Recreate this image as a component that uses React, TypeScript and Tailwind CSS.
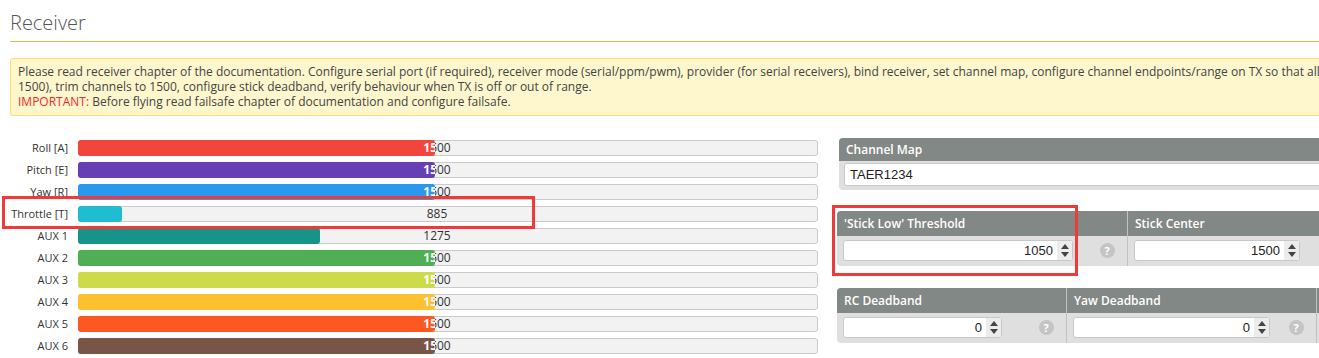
import React from "react";

type Channel = { name: string; color: string; value: number; fill: number };

const channels: Channel[] = [
    { name: "Roll [A]", color: "#f1453d", value: 1500, fill: 357 },
    { name: "Pitch [E]", color: "#673fb4", value: 1500, fill: 357 },
    { name: "Yaw [R]", color: "#2b98f0", value: 1500, fill: 357 },
    { name: "Throttle [T]", color: "#1fbcd2", value: 885, fill: 44 },
    { name: "AUX 1", color: "#159588", value: 1275, fill: 242 },
    { name: "AUX 2", color: "#50ae55", value: 1500, fill: 357 },
    { name: "AUX 3", color: "#cdda49", value: 1500, fill: 357 },
    { name: "AUX 4", color: "#fdc02f", value: 1500, fill: 357 },
    { name: "AUX 5", color: "#fd5722", value: 1500, fill: 357 },
    { name: "AUX 6", color: "#795548", value: 1500, fill: 357 },
];

const Spinner = () => (
    <div className="flex h-full w-[15px] flex-col items-center justify-center gap-[3px] bg-[#ececec]">
        <svg width="8" height="5" viewBox="0 0 8 5">
            <path d="M4 0 L8 5 L0 5 Z" fill="#444" />
        </svg>
        <svg width="8" height="5" viewBox="0 0 8 5">
            <path d="M0 0 L8 0 L4 5 Z" fill="#444" />
        </svg>
    </div>
);

const Help = () => (
    <div className="flex h-[15px] w-[15px] items-center justify-center rounded-full bg-[#c4c4c4] text-[11px] font-bold leading-none text-white">
        ?
    </div>
);

const NumberInput = ({ value, width }: { value: number; width: string }) => (
    <div className={`flex h-[21px] items-stretch rounded-[3px] border border-[#c8c8c8] bg-white ${width}`}>
        <div className="flex flex-1 items-center justify-end pr-[4px] font-['Liberation_Sans',Arial,sans-serif] text-[13px] text-[#222]">
            {value}
        </div>
        <Spinner />
    </div>
);

const Cell = ({
    title,
    value,
    cellWidth,
    inputWidth,
    last,
}: {
    title: string;
    value: number;
    cellWidth: string;
    inputWidth: string;
    last?: boolean;
}) => (
    <div className={`flex shrink-0 flex-col ${cellWidth} ${last ? "" : "border-r border-[#c2c2c2]"}`}>
        <div className="flex h-[25px] items-center whitespace-nowrap bg-[#828885] pl-[7px] text-[12px] font-semibold text-white">
            {title}
        </div>
        <div className="flex h-[30px] items-center justify-between pl-[6px] pb-[1px]">
            <NumberInput value={value} width={inputWidth} />
            <div className="flex w-[40px] justify-center">
                <Help />
            </div>
        </div>
    </div>
);

export default function App() {
    return (
        <div className="relative h-[358px] w-full overflow-hidden bg-white font-['Open_Sans',sans-serif] text-[#333]">
            <div className="w-[1360px] pl-[10px]">
                <div className="border-b border-[#ecb53a] pb-[6px] pt-[10px]">
                    <h1 className="text-[20px] font-light leading-[25px] text-[#555]">Receiver</h1>
                </div>
                <div className="mt-[16px] rounded-[3px] border border-[#fbe06a] bg-[#fef6cd] pb-[6px] pl-[7px] pt-[5px] text-[12px] leading-[15px] whitespace-nowrap text-[#444]">
                    <div>
                        Please read receiver chapter of the documentation. Configure serial port (if required), receiver mode (serial/ppm/pwm), provider (for serial receivers), bind receiver, set channel map, configure channel endpoints/range on TX so that all channels go from ~1000 to ~2000. Set midpoint (default
                    </div>
                    <div>
                        1500), trim channels to 1500, configure stick deadband, verify behaviour when TX is off or out of range.
                    </div>
                    <div>
                        <span className="text-[#f32a2a]">IMPORTANT:</span> Before flying read failsafe chapter of documentation and configure failsafe.
                    </div>
                </div>
            </div>

            <div className="mt-[24px] flex">
                <div className="flex w-[818px] shrink-0 flex-col gap-[6px]">
                    {channels.map((ch) => (
                        <div key={ch.name} className="flex h-[16px] items-center">
                            <div className="w-[68px] whitespace-nowrap text-right text-[11px] leading-[16px] text-[#333]">
                                {ch.name}
                            </div>
                            <div className="relative ml-[10px] h-[16px] flex-1 rounded-[3px] border border-[#cbcbcb] bg-[#f2f2f2]">
                                <div className="absolute left-0 top-0 w-[716px] text-center text-[12px] leading-[14px] text-[#333]">
                                    {ch.value}
                                </div>
                                <div
                                    className="absolute left-[-1px] top-[-1px] h-[16px] overflow-hidden rounded-[3px]"
                                    style={{ width: ch.fill, backgroundColor: ch.color }}
                                >
                                    <div className="absolute left-[1px] top-[1px] w-[716px] text-center text-[12px] font-bold leading-[14px] text-white">
                                        {ch.value}
                                    </div>
                                </div>
                            </div>
                        </div>
                    ))}
                </div>

                <div className="ml-[20px] flex w-[520px] shrink-0 flex-col">
                    <div className="-mt-[2px] ml-[1px] overflow-hidden rounded-l-[4px] bg-[#dfdfdf]">
                        <div className="flex h-[23px] items-center bg-[#828885] pl-[7px] text-[12px] font-semibold text-white">
                            Channel Map
                        </div>
                        <div className="px-[5px] pb-[4px] pt-[2px]">
                            <div className="flex h-[23px] items-center rounded-[3px] border border-[#c8c8c8] bg-white pl-[5px] font-['Liberation_Sans',Arial,sans-serif] text-[13px] text-[#222]">
                                TAER1234
                            </div>
                        </div>
                    </div>

                    <div className="-ml-[1px] mt-[21px] flex overflow-hidden rounded-l-[4px] bg-[#dfdfdf]">
                        <Cell title="'Stick Low' Threshold" value={1050} cellWidth="w-[291px]" inputWidth="w-[230px]" />
                        <Cell title="Stick Center" value={1500} cellWidth="w-[229px]" inputWidth="w-[166px]" last />
                    </div>

                    <div className="-ml-[1px] mt-[22px] flex overflow-hidden rounded-l-[4px] bg-[#dfdfdf]">
                        <Cell title="RC Deadband" value={0} cellWidth="w-[230px]" inputWidth="w-[159px]" />
                        <Cell title="Yaw Deadband" value={0} cellWidth="w-[250px]" inputWidth="w-[197px]" />
                        <Cell title="" value={0} cellWidth="w-[40px]" inputWidth="w-[40px]" last />
                    </div>
                </div>
            </div>

            <div className="absolute left-[2px] top-[196px] h-[33px] w-[533px] border-[3px] border-[#f03a3a]" />
            <div className="absolute left-[832px] top-[205px] h-[71px] w-[246px] border-[3px] border-[#f03a3a]" />
        </div>
    );
}
